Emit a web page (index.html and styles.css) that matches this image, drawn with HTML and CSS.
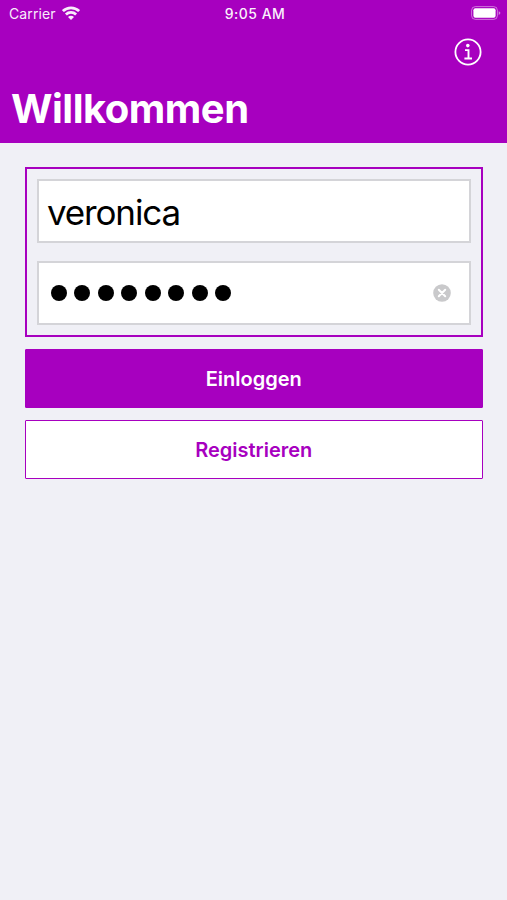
FILE: index.html
```
<!DOCTYPE html>
<html lang="de">
<head>
  <meta charset="UTF-8">
  <title>Willkommen</title>
  <link rel="stylesheet" href="styles.css">
</head>
<body>
<header>
  <div class="status-bar">
    <div class="carrier">
      <span>Carrier</span>
      <svg class="wifi" width="18" height="14" viewBox="0 0 18 14" fill="none" stroke="#fff" stroke-width="2.8">
        <path d="M0.9 5.1C5.4 0.7 12.6 0.7 17.1 5.1"/>
        <path d="M3.9 8.4C6.8 5.7 11.2 5.7 14.1 8.4"/>
        <path d="M9 14L6 11C7.7 9.4 10.3 9.4 12 11Z" fill="#fff" stroke="none"/>
      </svg>
    </div>
    <span class="time">9:05 AM</span>
    <div class="battery">
      <svg width="30" height="15" viewBox="0 0 30 15">
        <rect x="0.6" y="0.6" width="25.8" height="12.8" rx="3.8" fill="none" stroke="#fff" stroke-opacity="0.45"/>
        <rect x="2.4" y="2.3" width="22.2" height="9.4" rx="2" fill="#fff"/>
        <path d="M27.7 5.2Q29.4 6 29.4 7T27.7 8.9Z" fill="#fff" fill-opacity="0.5"/>
      </svg>
    </div>
  </div>
  <div class="toolbar">
    <svg class="info" width="28" height="28" viewBox="0 0 28 28" fill="none" stroke="#fff">
      <circle cx="14" cy="14" r="12.6" stroke-width="1.8"/>
      <circle cx="13.8" cy="7.6" r="1.8" fill="#fff" stroke="none"/>
      <path d="M11 12.1H14.5V20.4M10.4 20.5H18" stroke-width="1.9"/>
    </svg>
  </div>
  <h1>Willkommen</h1>
</header>
<main>
  <div class="fields">
    <div class="field">
      <span class="username">veronica</span>
    </div>
    <div class="field">
      <div class="password">
        <i></i><i></i><i></i><i></i><i></i><i></i><i></i><i></i>
      </div>
      <svg class="clear" width="18" height="18" viewBox="0 0 18 18">
        <circle cx="9" cy="9" r="8.8" fill="#c9c9cb"/>
        <path d="M5.8 5.8L12.2 12.2M12.2 5.8L5.8 12.2" stroke="#fff" stroke-width="2" stroke-linecap="round"/>
      </svg>
    </div>
  </div>
  <button class="login">Einloggen</button>
  <button class="register">Registrieren</button>
</main>
</body>
</html>
```
FILE: styles.css
```
* {
  box-sizing: border-box;
}
body {
  font-family: Inter, "Liberation Sans", sans-serif;
  background: #f0f0f6;
  margin: 0;
}
header {
  height: 142.5px;
  background: #a700bf;
  color: #fff;
}
.status-bar {
  display: grid;
  grid-template-columns: 1fr auto 1fr;
  align-items: center;
  height: 26px;
  padding: 0 6px 0 9px;
  font-size: 14px;
}
.carrier {
  display: flex;
  align-items: center;
  gap: 6px;
  letter-spacing: 0.1px;
  opacity: 0.93;
}
.wifi {
  margin-top: -1px;
}
.time {
  font-weight: 500;
  letter-spacing: 0.5px;
  opacity: 0.95;
}
.battery {
  display: flex;
  justify-content: flex-end;
  margin-top: 1px;
}
.toolbar {
  display: flex;
  justify-content: flex-end;
  height: 54px;
  padding: 12px 25px 0 0;
}
h1 {
  margin: 0;
  padding-left: 11px;
  font-size: 40px;
  line-height: 58px;
  font-weight: 700;
  letter-spacing: -0.5px;
}
main {
  display: flex;
  flex-direction: column;
  gap: 12px;
  padding: 24.5px 24.5px 0 25px;
}
.fields {
  display: flex;
  flex-direction: column;
  gap: 18px;
  height: 170px;
  padding: 10px;
  border: 2px solid #a700bf;
}
.field {
  display: flex;
  align-items: center;
  justify-content: space-between;
  height: 64px;
  padding: 0 17.5px 0 8px;
  background: #fff;
  border: 2px solid #d4d4d8;
}
.username {
  padding-top: 1px;
  font-size: 35px;
  letter-spacing: -1.15px;
  color: #000;
}
.password {
  display: flex;
  gap: 7.45px;
  padding-left: 4px;
}
.password i {
  width: 16px;
  height: 16px;
  border-radius: 50%;
  background: #000;
}
button {
  height: 59px;
  padding: 0;
  font-family: inherit;
  font-size: 20px;
  font-weight: 600;
  border: 1px solid #a700bf;
  border-radius: 1px;
}
.login {
  background: #a700bf;
  color: #fff;
}
.register {
  background: #fff;
  color: #a700bf;
}
```
